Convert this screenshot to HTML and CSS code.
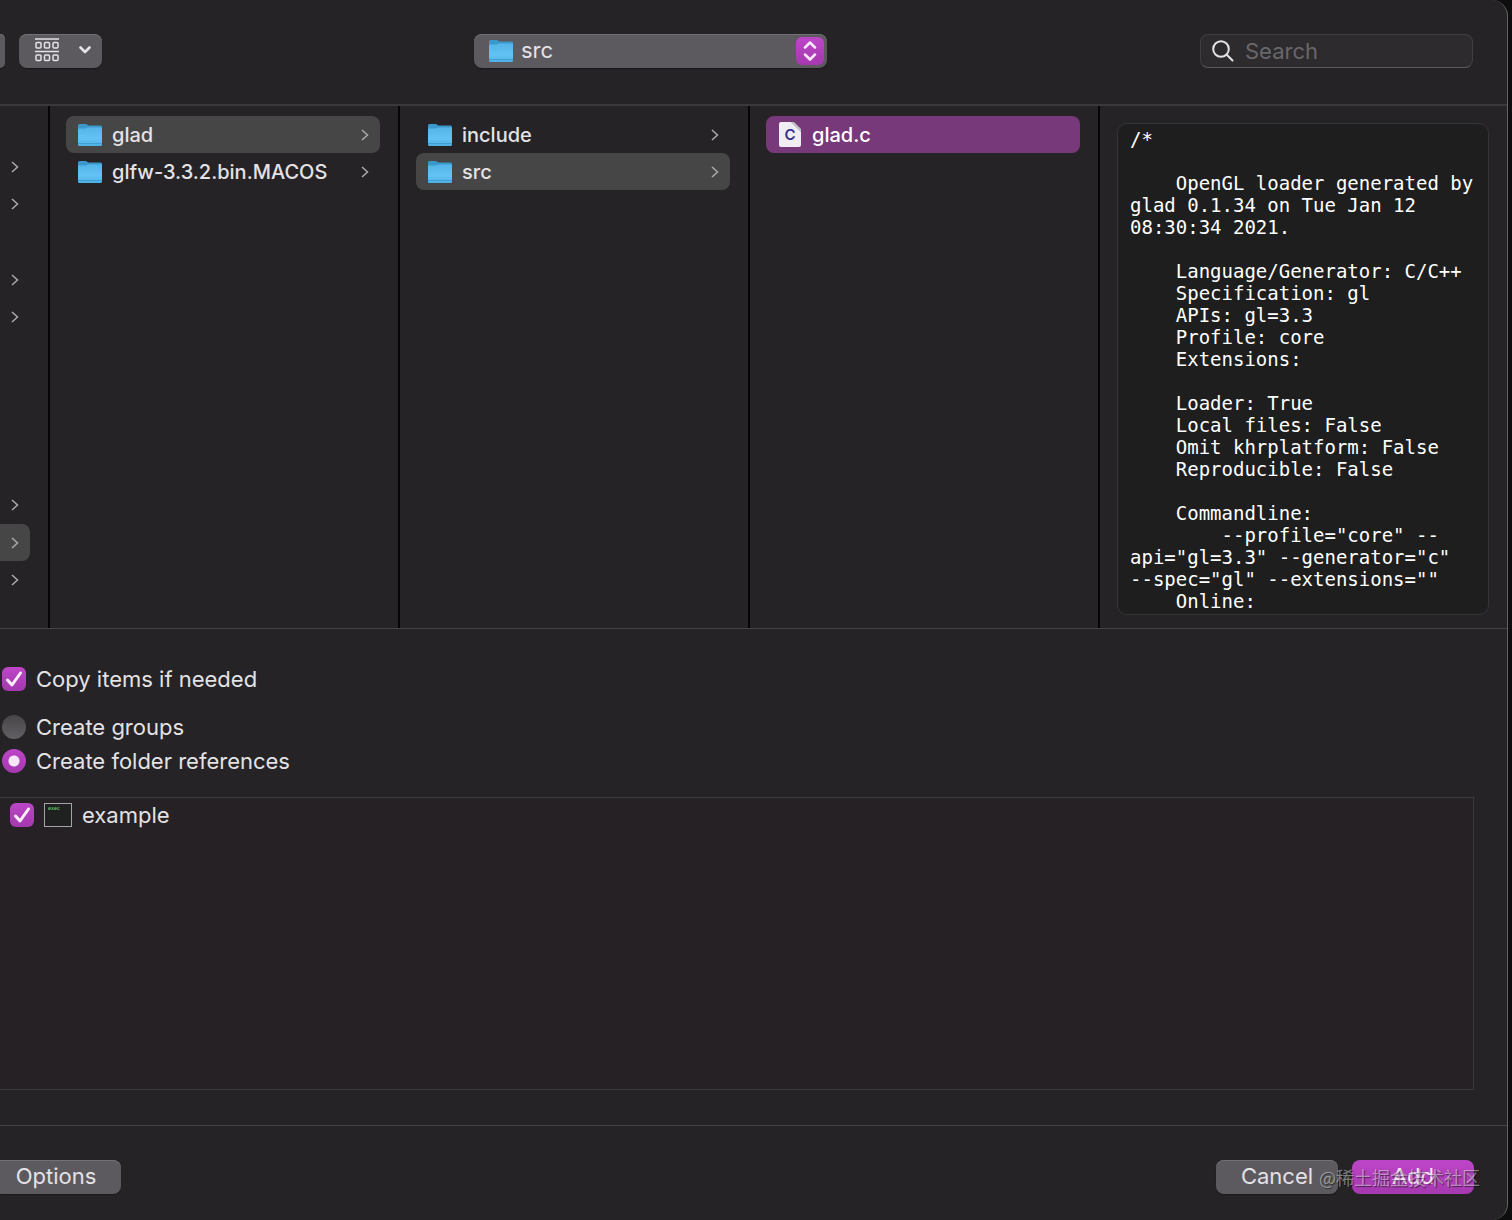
FILE: index.html
```html
<!DOCTYPE html>
<html lang="en">
<head>
<meta charset="utf-8">
<title>Add Files</title>
<link rel="stylesheet" href="styles.css">
</head>
<body>
<svg class="defs" aria-hidden="true">
  <defs>
    <linearGradient id="folder-fill" x1="0" y1="0" x2="0" y2="1">
      <stop offset="0" stop-color="#55b4e8"/><stop offset="0.6" stop-color="#62c3f3"/><stop offset="1" stop-color="#4fb0e4"/>
    </linearGradient>
    <symbol id="folder" viewBox="0 0 26 24">
      <path d="M1 2.500Q1 1 2.500 1H8.500Q9.500 1 10.500 2L11.500 2.500H23.500Q25 2.500 25 4V10H1Z" fill="#3a98cc"/>
      <path d="M1 5.500H8Q10 5.500 11 4.500H25V21.500Q25 23 23.500 23H2.500Q1 23 1 21.500Z" fill="url(#folder-fill)"/>
      <path d="M1 20.500H25" stroke="#3f9fd3" fill="none"/>
    </symbol>
    <symbol id="chevron" viewBox="0 0 8 12">
      <path d="M1 1L6.500 6L1 11" fill="none" stroke="currentColor" stroke-width="1.500"/>
    </symbol>
  </defs>
</svg>
<main class="dialog">
  <header class="toolbar">
    <div class="toolbar-left">
      <button class="stub" aria-label="View mode"></button>
      <button class="view-button" aria-label="Group items">
        <svg width="24" height="24" viewBox="0 0 24 24" fill="none" stroke="currentColor" stroke-width="1.500"><path d="M0 1H24M0 13.500H24"/><rect x="1" y="4.500" width="5" height="5.500" rx="1"/><rect x="9.500" y="4.500" width="5" height="5.500" rx="1"/><rect x="18" y="4.500" width="5" height="5.500" rx="1"/><rect x="1" y="17" width="5" height="5.500" rx="1"/><rect x="9.500" y="17" width="5" height="5.500" rx="1"/><rect x="18" y="17" width="5" height="5.500" rx="1"/></svg>
        <svg width="12" height="8" viewBox="0 0 12 8" fill="none" stroke="currentColor" stroke-width="2.600" stroke-linecap="round" stroke-linejoin="round"><path d="M1.500 1.500L6 6L10.500 1.500"/></svg>
      </button>
    </div>
    <div class="location">
      <svg class="folder"><use href="#folder"/></svg>
      <select aria-label="Location"><option>src</option></select>
      <span class="stepper"><svg width="14" height="20" viewBox="0 0 14 20" fill="none" stroke="currentColor" stroke-width="2.500" stroke-linecap="round" stroke-linejoin="round"><path d="M2 6.500L7 1.500L12 6.500M2 13.500L7 18.500L12 13.500"/></svg></span>
    </div>
    <label class="search">
      <svg width="22" height="22" viewBox="0 0 22 22" fill="none" stroke="currentColor" stroke-width="2" stroke-linecap="round"><circle cx="9" cy="9" r="7.800"/><path d="M14.800 14.800L20.500 20.500"/></svg>
      <input type="search" placeholder="Search" aria-label="Search">
    </label>
  </header>

  <section class="browser">
    <ul class="column parents">
      <li><svg class="chevron"><use href="#chevron"/></svg></li>
      <li><svg class="chevron"><use href="#chevron"/></svg></li>
      <li></li>
      <li><svg class="chevron"><use href="#chevron"/></svg></li>
      <li><svg class="chevron"><use href="#chevron"/></svg></li>
      <li></li>
      <li></li>
      <li></li>
      <li></li>
      <li><svg class="chevron"><use href="#chevron"/></svg></li>
      <li class="current"><svg class="chevron"><use href="#chevron"/></svg></li>
      <li><svg class="chevron"><use href="#chevron"/></svg></li>
    </ul>
    <ul class="column">
      <li class="row current"><svg class="folder"><use href="#folder"/></svg><span>glad</span><svg class="chevron"><use href="#chevron"/></svg></li>
      <li class="row"><svg class="folder"><use href="#folder"/></svg><span>glfw-3.3.2.bin.MACOS</span><svg class="chevron"><use href="#chevron"/></svg></li>
    </ul>
    <ul class="column">
      <li class="row"><svg class="folder"><use href="#folder"/></svg><span>include</span><svg class="chevron"><use href="#chevron"/></svg></li>
      <li class="row current"><svg class="folder"><use href="#folder"/></svg><span>src</span><svg class="chevron"><use href="#chevron"/></svg></li>
    </ul>
    <ul class="column">
      <li class="row selected"><span class="c-file">C</span><span>glad.c</span></li>
    </ul>
    <div class="preview"><pre>/*

    OpenGL loader generated by
glad 0.1.34 on Tue Jan 12
08:30:34 2021.

    Language/Generator: C/C++
    Specification: gl
    APIs: gl=3.3
    Profile: core
    Extensions:

    Loader: True
    Local files: False
    Omit khrplatform: False
    Reproducible: False

    Commandline:
        --profile="core" --
api="gl=3.3" --generator="c"
--spec="gl" --extensions=""
    Online:</pre></div>
  </section>

  <section class="options">
    <label class="choice copy"><input type="checkbox" checked>Copy items if needed</label>
    <label class="choice"><input type="radio" name="kind">Create groups</label>
    <label class="choice"><input type="radio" name="kind" checked>Create folder references</label>
  </section>

  <section class="targets">
    <label class="target"><input type="checkbox" checked>
      <span class="exec">exec</span>
      example</label>
  </section>

  <footer class="actions">
    <button class="button options-button">Options</button>
    <button class="button">Cancel</button>
    <button class="button primary">Add</button>
    <span class="watermark">@稀土掘金技术社区</span>
  </footer>
</main>
</body>
</html>
```
FILE: styles.css
```css
* { box-sizing: border-box; }

body {
  margin: 0;
  background: #0e0e0f;
  color: #e4e2e5;
  font: 22px/28px Inter, "Noto Sans CJK SC", sans-serif;
}

button, input, select { font: inherit; color: inherit; }
ul { list-style: none; margin: 0; padding: 0; }
.defs { position: absolute; width: 0; height: 0; }

.dialog {
  display: flex;
  flex-direction: column;
  min-height: 100vh;
  margin-right: 4px;
  background: #252326;
  border-right: 1px solid #656366;
  border-radius: 0 16px 16px 0;
}

.toolbar {
  display: grid;
  grid-template-columns: 474fr 353px 646fr;
  align-items: center;
  height: 106px;
  padding: 0 34px 2px 0;
  border-bottom: 2px solid #39373a;
}

.toolbar-left { display: flex; gap: 14px; }
.stub, .view-button {
  height: 34px;
  border: 0;
  border-radius: 8px;
  background: #5d5a5f;
  box-shadow: inset 0 1px #727074, 0 1px 1px #1a181b;
}
.stub { width: 5px; padding: 0; border-radius: 0 6px 6px 0; }
.view-button {
  display: flex;
  align-items: center;
  justify-content: space-between;
  width: 83px;
  padding: 0 11px 2px 16px;
}

.location {
  display: flex;
  align-items: center;
  height: 34px;
  padding: 0 3px 0 14px;
  border-radius: 8px;
  background: #5d5a5f;
  box-shadow: inset 0 1px #727074, 0 1px 1px #1a181b;
}
.location select {
  flex: 1;
  appearance: none;
  border: 0;
  padding: 0 0 2px 7px;
  background: none;
}
.stepper {
  display: grid;
  place-items: center;
  width: 28px;
  height: 28px;
  border-radius: 6px;
  background: linear-gradient(#bd46c8, #a538af);
  color: #f7e8f8;
}

.folder { flex: none; width: 26px; height: 24px; }
.chevron { flex: none; width: 8px; height: 12px; color: #aaa8ab; }

.search {
  display: flex;
  align-items: center;
  justify-self: end;
  gap: 11px;
  width: 273px;
  height: 34px;
  padding: 0 11px;
  border: 1px solid #403e41;
  border-bottom-color: #5c5a5d;
  border-radius: 8px;
  background: #2d2b2e;
}
.search svg { flex: none; }
.search input { min-width: 0; flex: 1; border: 0; padding: 0; background: none; outline: 0; }
.search input::placeholder { color: #69676a; opacity: 1; }

.browser {
  display: grid;
  grid-template-columns: 50px 350px 350px 350px 1fr;
  height: 523px;
  border-bottom: 1px solid #454346;
}
.column { padding: 10px 18px 0 16px; border-right: 2px solid #060506; }
.parents { display: flex; flex-direction: column; padding: 42px 18px 29px 0; }
.parents li {
  flex: 1;
  display: flex;
  align-items: center;
  justify-content: flex-end;
  padding-right: 11px;
  border-radius: 0 8px 8px 0;
}
.row {
  display: flex;
  align-items: center;
  gap: 9px;
  height: 37px;
  padding: 0 11px;
  border-radius: 8px;
  font-size: 20px;
  font-weight: 500;
}
.row .chevron { margin-left: auto; }
.row.current, .parents .current { background: #464646; }
.row.selected { background: #78397b; color: #fff; }
.c-file {
  width: 22px;
  height: 25px;
  margin: 0 2px;
  border-radius: 2px;
  background: linear-gradient(45deg, #f0eef2 78%, #c4c2c8 78%);
  clip-path: polygon(0 0, 68% 0, 100% 28%, 100% 100%, 0 100%);
  color: #35308a;
  font-size: 15px;
  font-weight: 600;
  line-height: 25px;
  text-align: center;
}

.preview {
  margin: 17px 18px 13px 17px;
  padding: 4px 12px 0;
  overflow: hidden;
  border: 1px solid #353436;
  border-radius: 10px;
  background: #1e1e1e;
  color: #fff;
}
.preview pre { margin: 0; font: 19px/22px "DejaVu Sans Mono", monospace; }

.options { display: flex; flex-direction: column; padding: 33px 0 19px 2px; }
.choice, .target { display: flex; align-items: center; height: 34px; }
.choice { gap: 10px; }
.copy { margin-bottom: 14px; }

input[type="checkbox"], input[type="radio"] {
  appearance: none;
  flex: none;
  width: 24px;
  height: 24px;
  margin: 0;
  border-radius: 6px;
  background: linear-gradient(#bd46c8, #a538af);
}
input[type="checkbox"]:checked {
  background: url("data:image/svg+xml,%3Csvg xmlns='http://www.w3.org/2000/svg' viewBox='0 0 24 24'%3E%3Cpath d='M5.500 13L10 18L18.500 6' fill='none' stroke='%23fbeefb' stroke-width='3' stroke-linecap='round' stroke-linejoin='round'/%3E%3C/svg%3E"), linear-gradient(#bd46c8, #a538af);
}
input[type="radio"] { border-radius: 50%; background: linear-gradient(#474548, #626064); }
input[type="radio"]:checked { background: radial-gradient(circle, #f7e5f8 5px, transparent 6px), linear-gradient(#bd46c8, #a538af); }

.targets {
  flex: 1;
  margin-right: 33px;
  padding-left: 10px;
  border: 1px solid #3d3b3e;
  border-left: 0;
  background: #252124;
}
.target { gap: 10px; }
.exec {
  width: 28px;
  height: 24px;
  padding-left: 3px;
  border: 1px solid #a5a3a6;
  background: #1e211f;
  color: #62bd6b;
  font: bold 5px/8px "DejaVu Sans Mono", monospace;
}

.actions {
  position: relative;
  display: flex;
  gap: 14px;
  height: 95px;
  margin-top: 35px;
  padding: 34px 33px 0 0;
  border-top: 1px solid #454346;
}
.button {
  width: 122px;
  height: 34px;
  border: 0;
  border-radius: 8px;
  padding: 0 0 2px;
  background: #5d5a5f;
  box-shadow: inset 0 1px #727074, 0 1px 1px #1a181b;
}
.options-button { width: 121px; margin-right: auto; padding-right: 9px; border-radius: 0 8px 8px 0; }
.primary { background: linear-gradient(#bd46c8, #a538af); box-shadow: none; color: #f7e8f8; }
.watermark {
  position: absolute;
  right: 27px;
  top: 37px;
  color: #ffffff70;
  font: 18px/28px "Noto Sans CJK SC", sans-serif;
  text-shadow: 1px 1px 1px #0008;
}
```
